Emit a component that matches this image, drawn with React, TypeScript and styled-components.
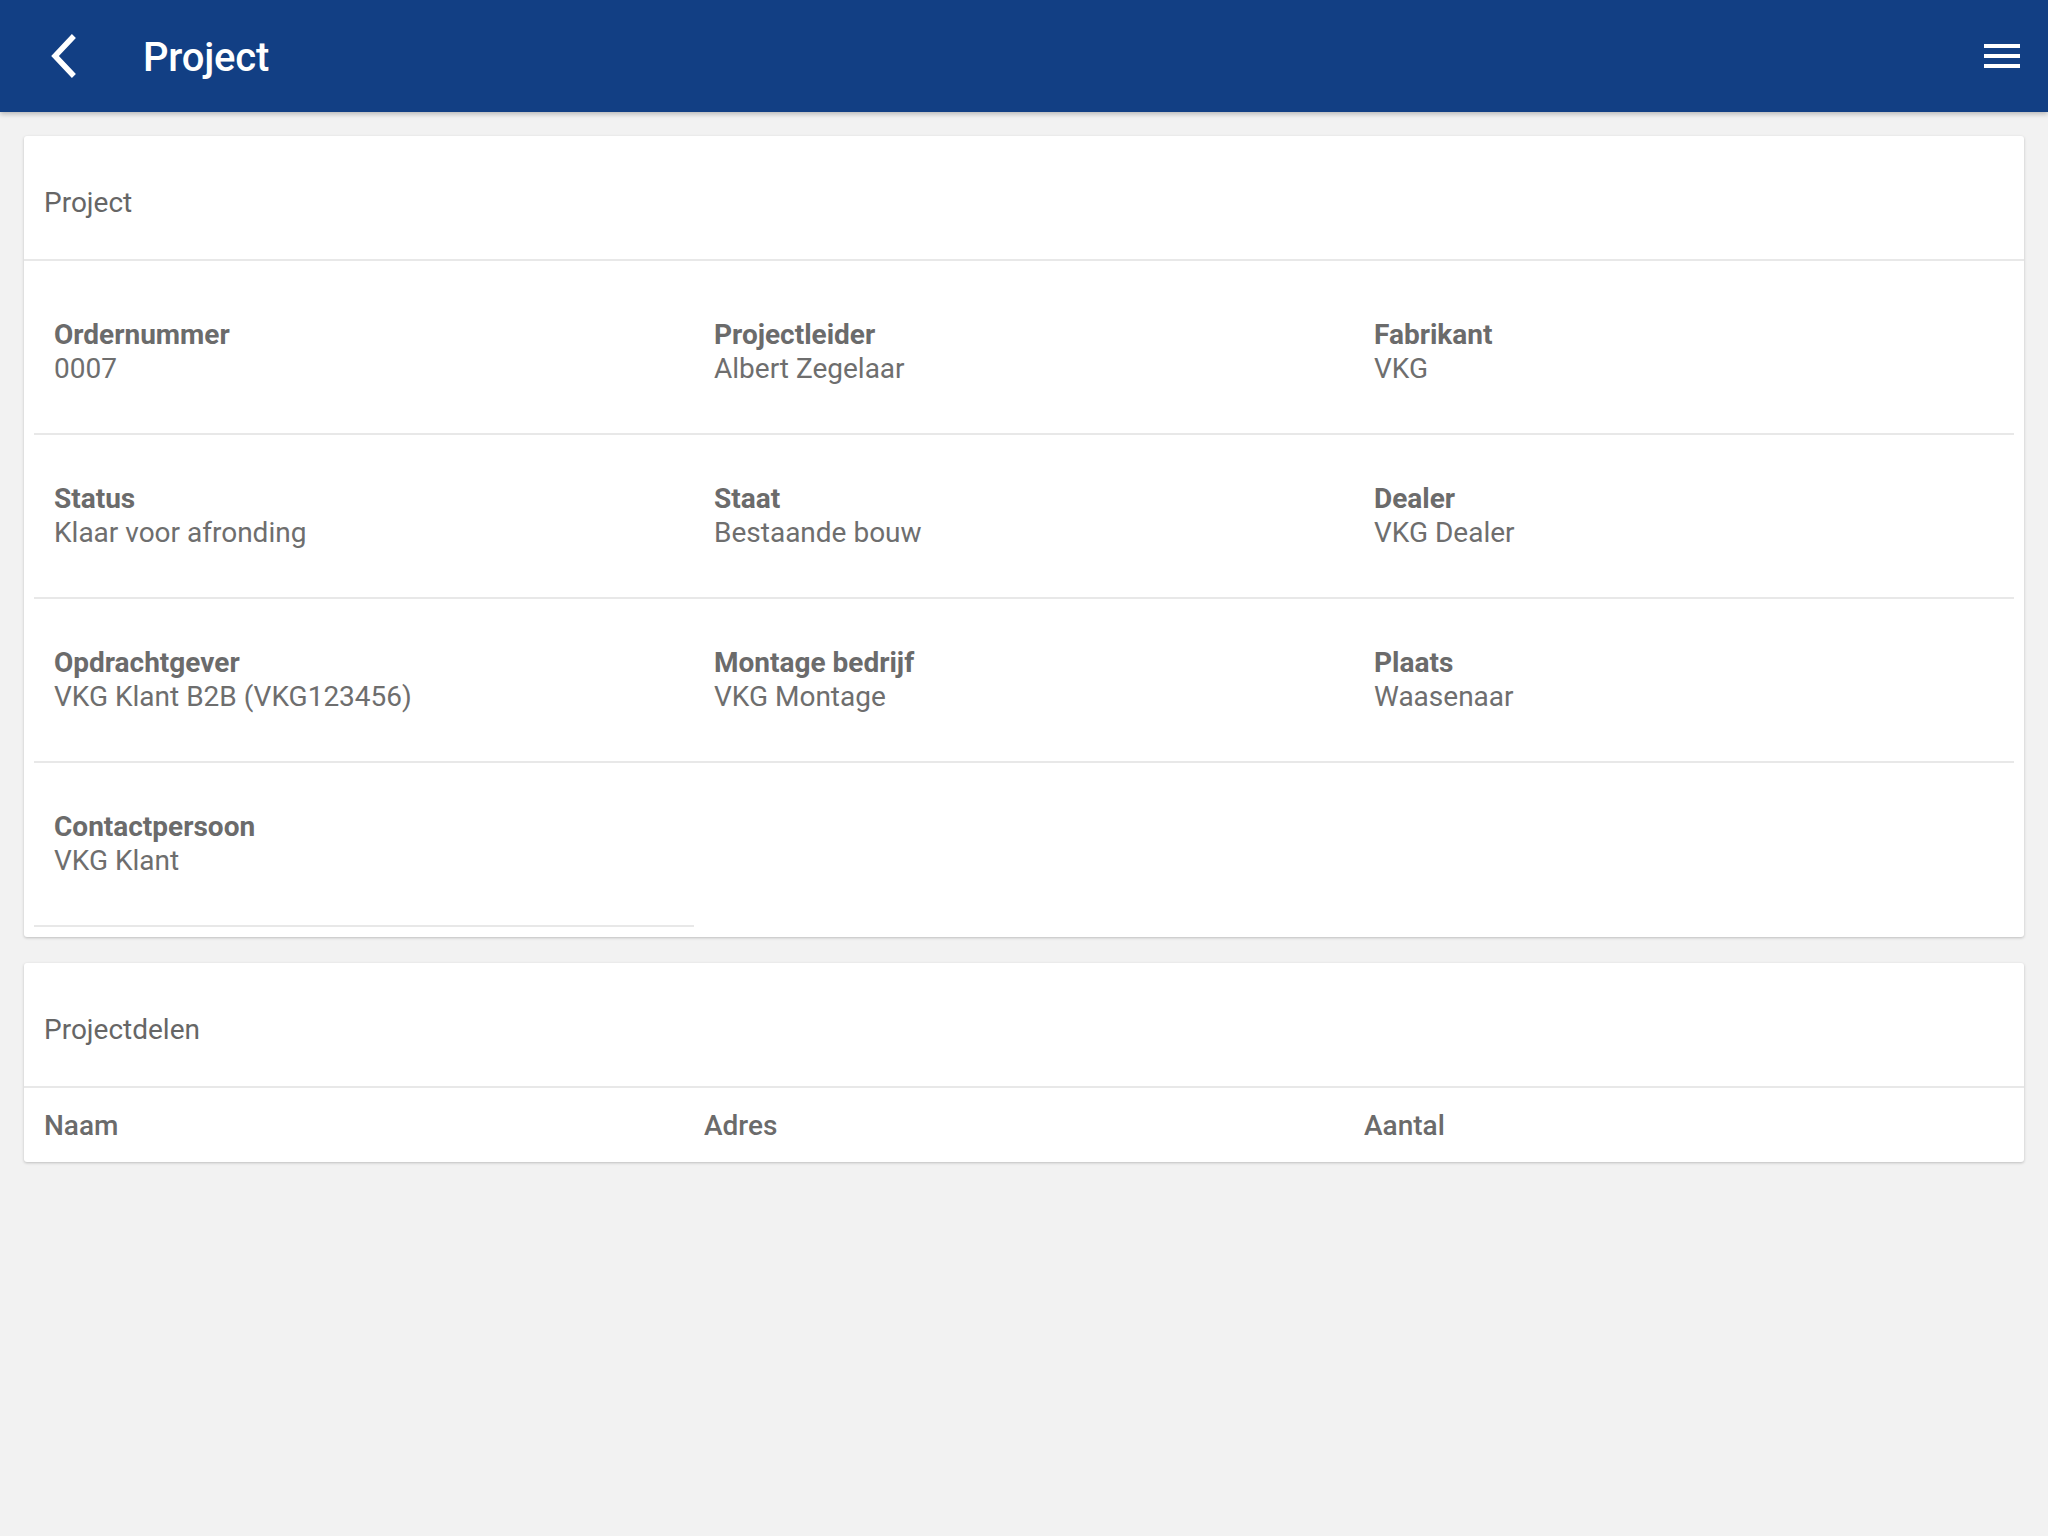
import React from 'react';
import styled, { createGlobalStyle } from 'styled-components';

const GlobalStyle = createGlobalStyle`
  html, body {
    margin: 0;
    padding: 0;
    background: #f2f2f2;
    font-family: Roboto, "Noto Sans", "Liberation Sans", sans-serif;
  }
  * { box-sizing: border-box; }
`;

type Field = { label: string; value: string };

const fields: Field[] = [
  { label: 'Ordernummer', value: '0007' },
  { label: 'Projectleider', value: 'Albert Zegelaar' },
  { label: 'Fabrikant', value: 'VKG' },
  { label: 'Status', value: 'Klaar voor afronding' },
  { label: 'Staat', value: 'Bestaande bouw' },
  { label: 'Dealer', value: 'VKG Dealer' },
  { label: 'Opdrachtgever', value: 'VKG Klant B2B (VKG123456)' },
  { label: 'Montage bedrijf', value: 'VKG Montage' },
  { label: 'Plaats', value: 'Waasenaar' },
  { label: 'Contactpersoon', value: 'VKG Klant' },
];

const columns = ['Naam', 'Adres', 'Aantal'];

const App: React.FC = () => {
  return (
    <Page>
      <GlobalStyle />
      <TopBar>
        <BackButton aria-label="Terug">
          <svg width="30" height="44" viewBox="0 0 30 44">
            <path d="M24 4 L7 22 L24 40" fill="none" stroke="#ffffff" strokeWidth="5.5" strokeLinecap="square" />
          </svg>
        </BackButton>
        <BarTitle>Project</BarTitle>
        <MenuButton aria-label="Menu">
          <MenuLine />
          <MenuLine />
          <MenuLine />
        </MenuButton>
      </TopBar>

      <Content>
        <Card>
          <CardHeader>Project</CardHeader>
          <FieldGrid>
            {fields.map((f) => (
              <FieldCell key={f.label}>
                <FieldLabel>{f.label}</FieldLabel>
                <FieldValue>{f.value}</FieldValue>
              </FieldCell>
            ))}
          </FieldGrid>
        </Card>

        <Card>
          <CardHeader>Projectdelen</CardHeader>
          <TableHead>
            {columns.map((c) => (
              <HeadCell key={c}>{c}</HeadCell>
            ))}
          </TableHead>
        </Card>
      </Content>
    </Page>
  );
};

// Styled Components
const Page = styled.div`
  min-height: 100vh;
  background: #f2f2f2;
`;

const TopBar = styled.header`
  height: 112px;
  background: #123f84;
  display: flex;
  align-items: center;
  padding: 0 28px 0 47px;
  box-shadow: 0 2px 5px rgba(0, 0, 0, 0.25);
  position: relative;
  z-index: 1;
`;

const BackButton = styled.button`
  background: none;
  border: none;
  padding: 0;
  width: 32px;
  height: 46px;
  display: flex;
  align-items: center;
  justify-content: center;
  cursor: pointer;
`;

const BarTitle = styled.h1`
  margin: 2px 0 0 64px;
  flex: 1;
  color: #ffffff;
  font-size: 40px;
  font-weight: 500;
  letter-spacing: -0.2px;
`;

const MenuButton = styled.button`
  background: none;
  border: none;
  padding: 0;
  width: 36px;
  height: 24px;
  display: flex;
  flex-direction: column;
  justify-content: space-between;
  cursor: pointer;
`;

const MenuLine = styled.span`
  display: block;
  height: 4px;
  width: 100%;
  background: #ffffff;
`;

const Content = styled.main`
  padding: 24px 24px;
  display: flex;
  flex-direction: column;
  gap: 26px;
`;

const Card = styled.section`
  background: #ffffff;
  border-radius: 3px;
  box-shadow: 0 1px 3px rgba(0, 0, 0, 0.22);
`;

const CardHeader = styled.h2`
  margin: 0;
  height: 125px;
  display: flex;
  align-items: center;
  padding: 10px 20px 0;
  font-size: 28px;
  font-weight: 400;
  color: #666666;
  border-bottom: 2px solid #e8e8e8;
`;

const FieldGrid = styled.div`
  display: grid;
  grid-template-columns: repeat(3, 1fr);
  padding: 10px 10px;
`;

const FieldCell = styled.div`
  height: 164px;
  padding: 0 20px;
  display: flex;
  flex-direction: column;
  justify-content: center;
  border-bottom: 2px solid #e8e8e8;
`;

const FieldLabel = styled.div`
  font-size: 28px;
  font-weight: 700;
  line-height: 34px;
  color: #6b6b6b;
`;

const FieldValue = styled.div`
  font-size: 28px;
  font-weight: 400;
  line-height: 34px;
  color: #6e6e6e;
`;

const TableHead = styled.div`
  display: grid;
  grid-template-columns: repeat(3, 1fr);
  height: 74px;
  align-items: center;
  padding: 0 10px;
`;

const HeadCell = styled.div`
  padding: 0 10px;
  font-size: 28px;
  font-weight: 500;
  color: #6b6b6b;
`;

export default App;
